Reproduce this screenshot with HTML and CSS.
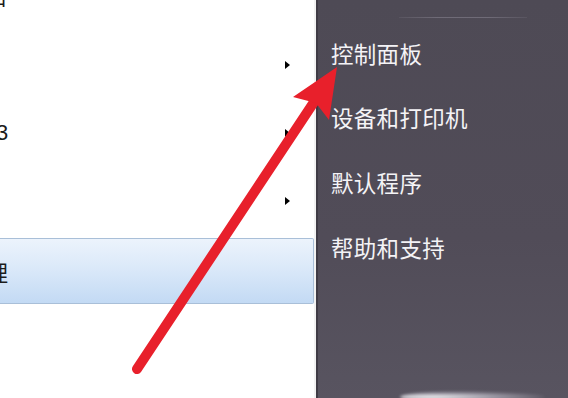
FILE: index.html
```html
<!DOCTYPE html>
<html>
	<head>
		<meta charset="UTF-8">
		<title>开始菜单</title>
		<link rel="stylesheet" href="styles.css">
	</head>
	<body>
		<div id="menu">

			<!--左侧程序列表-->
			<div class="left">
				<div class="row row-top"><span class="txt cut-top">口</span></div>
				<div class="row"><span class="txt"></span><i class="tri"></i></div>
				<div class="row"><span class="txt cut-three">3</span><i class="tri"></i></div>
				<div class="row"><span class="txt"></span><i class="tri"></i></div>
				<div class="row row-hot"><span class="txt cut-li">理</span></div>
			</div>

			<!--右侧系统链接-->
			<div class="right">
				<div class="sep"></div>
				<a class="link" href="javascript:;">控制面板</a>
				<a class="link" href="javascript:;">设备和打印机</a>
				<a class="link" href="javascript:;">默认程序</a>
				<a class="link" href="javascript:;">帮助和支持</a>
				<div class="glow"></div>
			</div>

			<!--红色指示箭头-->
			<svg class="arrow" width="568" height="398" viewBox="0 0 568 398">
				<line x1="137" y1="369" x2="318" y2="96" stroke="#e8202b" stroke-width="10" stroke-linecap="round"/>
				<polygon points="337,67 329,120 316,103 293,97" fill="#e8202b"/>
			</svg>

		</div>
	</body>
</html>
```

FILE: styles.css
```css
*{
	margin: 0;
	padding: 0;
}

body{
	width: 568px;
	height: 398px;
	overflow: hidden;
	font-family: "Noto Sans CJK SC", "Liberation Sans", sans-serif;
}

#menu{
	position: relative;
	display: flex;
	width: 568px;
	height: 398px;
}

/*左侧白色列表*/
.left{
	width: 314px;
	background-color: #fff;
	border-right: 2px solid #f2f2f2;
	display: flex;
	flex-direction: column;
	overflow: hidden;
}

.row{
	height: 68px;
	display: flex;
	align-items: center;
	justify-content: space-between;
	padding-right: 24px;
	flex-shrink: 0;
}

.row-top{
	height: 31px;
	align-items: flex-start;
}

.txt{
	font-size: 21px;
	color: #1c1c1c;
	line-height: 1;
}

.cut-top{
	margin-left: -14px;
	margin-top: -14px;
}

.cut-three{
	margin-left: -4px;
	font-family: "Liberation Sans", sans-serif;
	font-size: 22px;
}

.cut-li{
	margin-left: -14px;
	font-size: 22px;
}

/*子菜单三角*/
.tri{
	width: 0;
	height: 0;
	border-top: 4px solid transparent;
	border-bottom: 4px solid transparent;
	border-left: 5px solid #000;
}

/*选中项*/
.row-hot{
	margin-top: 3px;
	height: 64px;
	border: 1px solid #a9bfd8;
	border-left: none;
	border-radius: 0 2px 2px 0;
	background: linear-gradient(#ecf3fc, #dbe9f9 45%, #c3daf4);
}

/*右侧深色面板*/
.right{
	flex: 1;
	position: relative;
	border-left: 2px solid #3f3b45;
	background: linear-gradient(#4e4a55, #514c58 60%, #585460);
	padding-left: 13px;
	display: flex;
	flex-direction: column;
	overflow: hidden;
}

.sep{
	height: 1px;
	margin: 17px 0 0 68px;
	width: 128px;
	background: linear-gradient(90deg, rgba(130,126,138,0.2), #6f6b77 30%, #6f6b77 70%, rgba(130,126,138,0.2));
}

.link{
	display: block;
	height: 65px;
	line-height: 68px;
	font-size: 22.5px;
	color: #f4f3f6;
	text-decoration: none;
	letter-spacing: 0.3px;
}

.link:first-of-type{
	line-height: 70px;
}

/*底部按钮的模糊高光*/
.glow{
	position: absolute;
	left: 82px;
	bottom: -5px;
	width: 145px;
	height: 12px;
	border-radius: 50%;
	background: radial-gradient(ellipse at 22% 50%, rgba(255,255,255,0.95), rgba(215,213,225,0.55) 40%, rgba(90,86,100,0) 75%);
	filter: blur(1.5px);
}

.arrow{
	position: absolute;
	left: 0;
	top: 0;
}
```
